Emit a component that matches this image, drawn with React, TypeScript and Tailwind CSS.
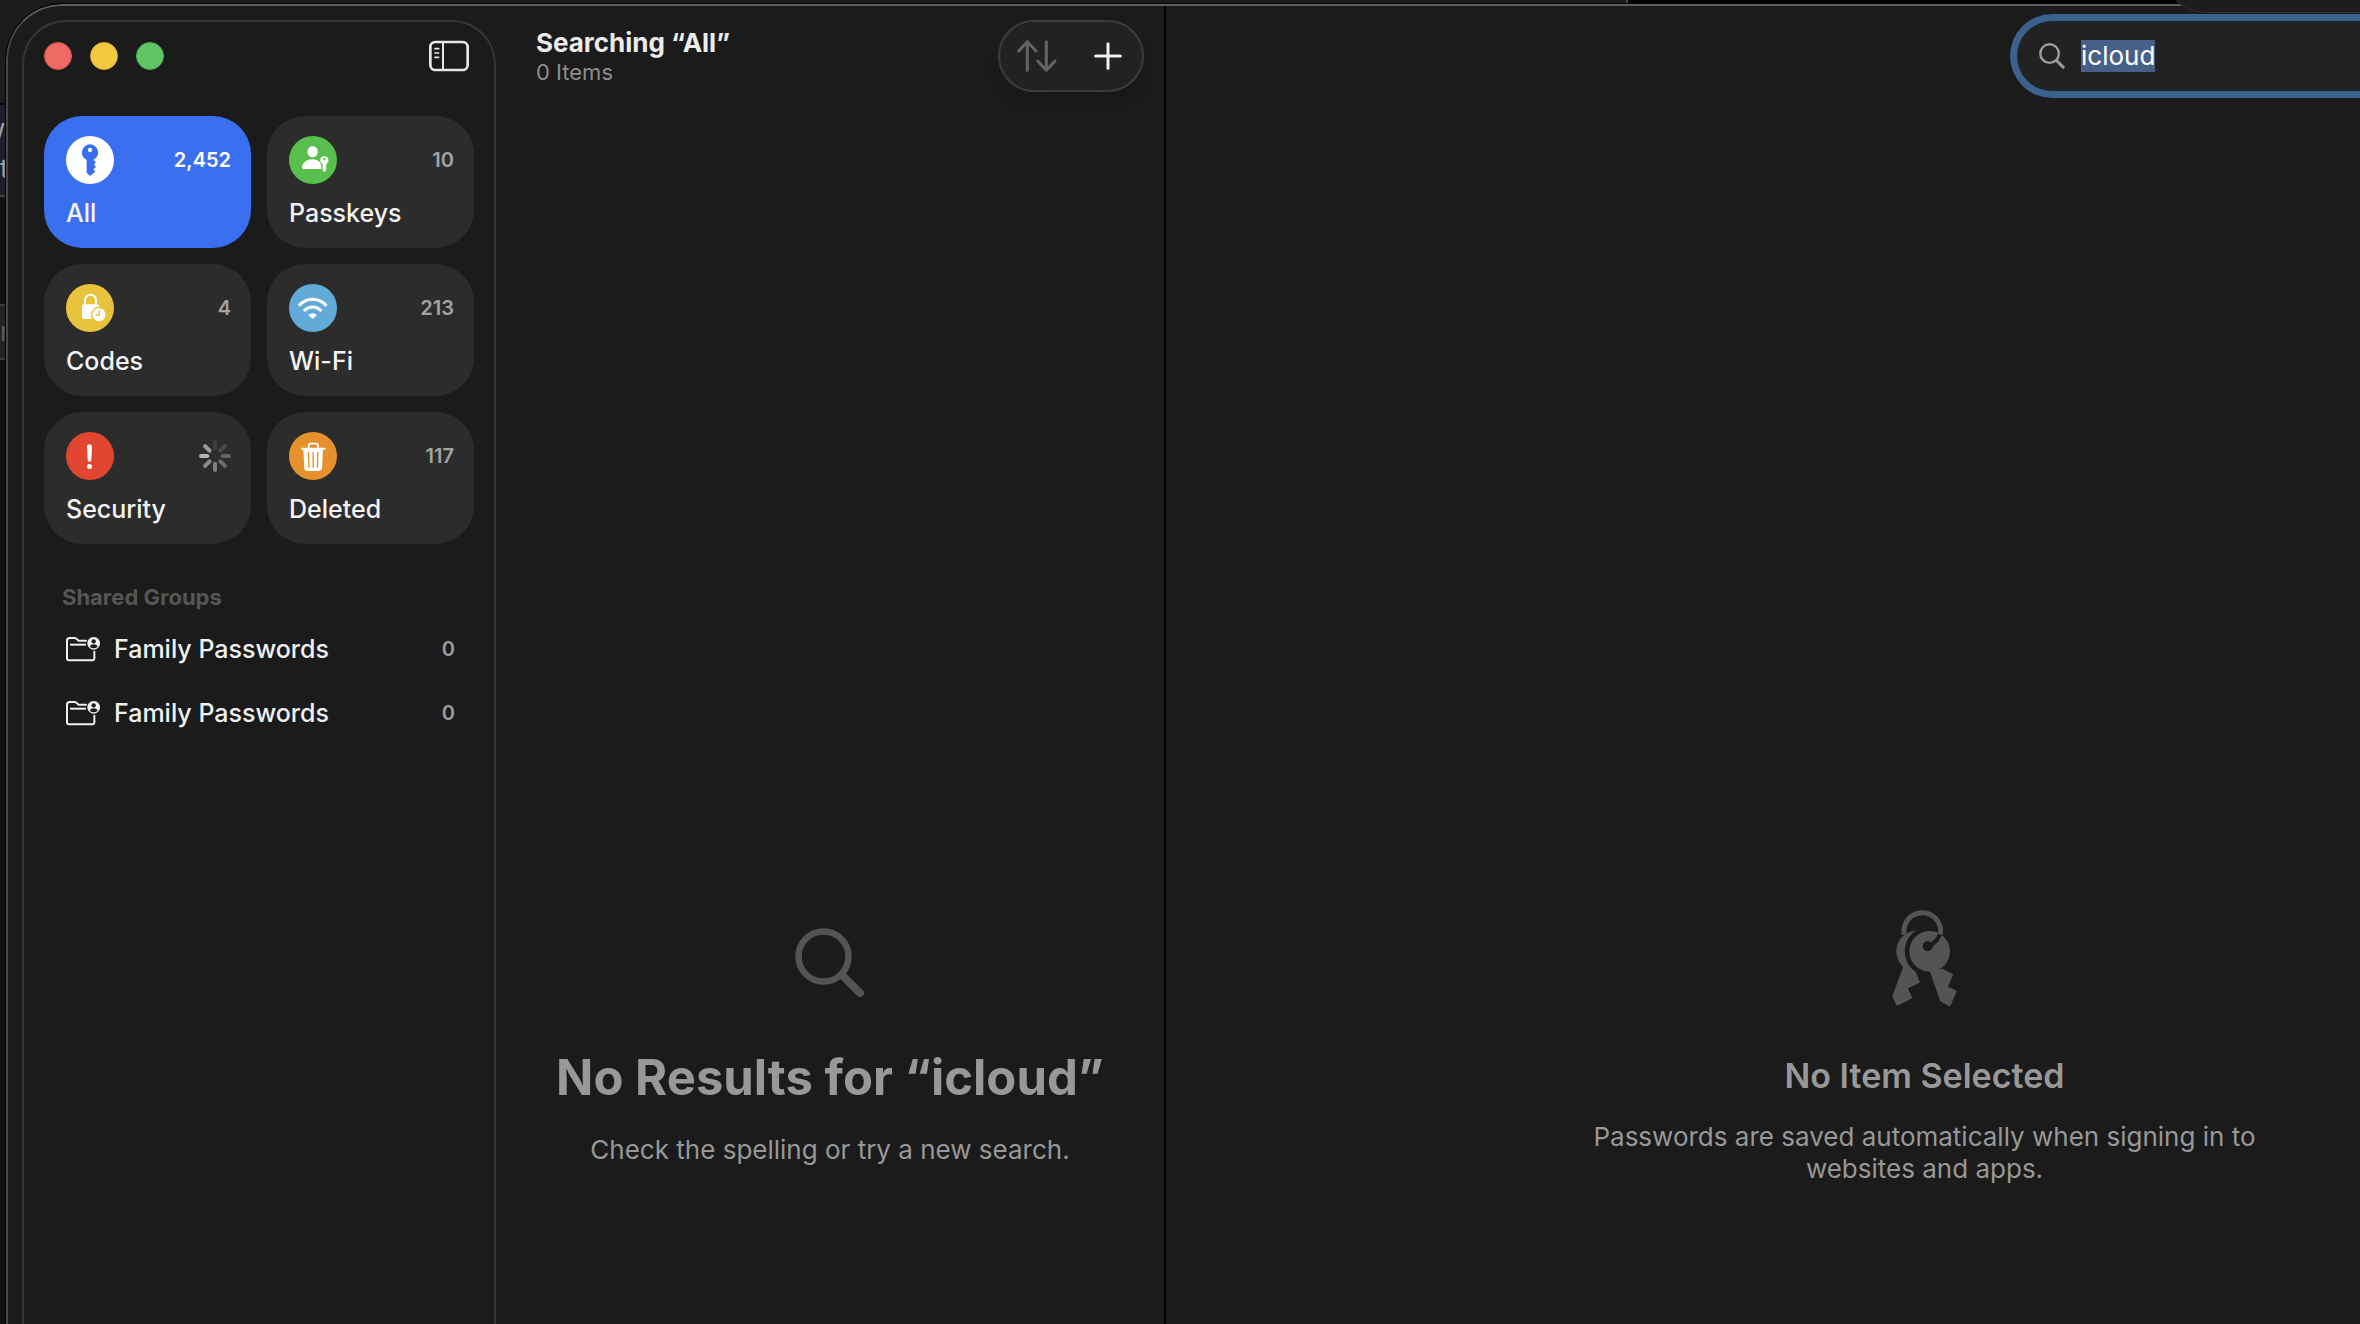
import { useEffect, useRef } from "react";
import type { ReactNode } from "react";

interface Category {
  label: string;
  count?: string;
  color: string;
  icon: ReactNode;
  active?: boolean;
}

const categories: Category[] = [
  { label: "All", count: "2,452", color: "bg-white", icon: <KeyGlyph />, active: true },
  { label: "Passkeys", count: "10", color: "bg-[#58bf4c]", icon: <PasskeyGlyph /> },
  { label: "Codes", count: "4", color: "bg-[#eac33c]", icon: <CodesGlyph /> },
  { label: "Wi-Fi", count: "213", color: "bg-[#62abd9]", icon: <WifiGlyph /> },
  { label: "Security", color: "bg-[#e14631]", icon: <AlertGlyph /> },
  { label: "Deleted", count: "117", color: "bg-[#e6912e]", icon: <TrashGlyph /> },
];

const groups = [
  { id: 1, name: "Family Passwords", count: 0 },
  { id: 2, name: "Family Passwords", count: 0 },
];

function KeyGlyph() {
  return (
    <svg viewBox="0 0 144 144" className="size-12" aria-hidden="true">
      <path
        fill="#3a6ff0"
        fillRule="evenodd"
        d="M72 25a24.500 24.500 0 0 1 10 46.800L90 78l-6 7 6 8-8 7 6 7-16 13-10-10V71.800A24.500 24.500 0 0 1 72 25Zm0 10.500a6.500 6.500 0 1 0 0 13 6.500 6.500 0 0 0 0-13Z"
      />
    </svg>
  );
}

function PasskeyGlyph() {
  return (
    <svg viewBox="0 0 144 144" className="size-12" aria-hidden="true" fill="#fff">
      <ellipse cx="71" cy="47" rx="15.500" ry="17" />
      <path d="M44 99c-3 0-5-2-5-5 1-14 15-24 31-24 9 0 17 3 22 8 1 4 3 7 5 9v12Z" />
      <path
        fillRule="evenodd"
        d="M106 61a12 12 0 0 1 5 23l2 4-3 4 3 4-3 4 1 3-5 5-5-5V84a12 12 0 0 1 5-23Zm0 5a3.500 3.500 0 1 0 0 7 3.500 3.500 0 0 0 0-7Z"
      />
    </svg>
  );
}

function CodesGlyph() {
  return (
    <svg viewBox="0 0 144 144" className="size-12" aria-hidden="true">
      <path d="M57 64V48a16.500 16 0 0 1 33 0v16" fill="none" stroke="#fff" strokeWidth="6" />
      <rect x="48" y="61" width="51" height="44" rx="6" fill="#fff" />
      <circle cx="99" cy="92" r="24" fill="#eac33c" />
      <circle cx="99" cy="92" r="19.500" fill="#fff" />
      <path d="M100 80v13H90" fill="none" stroke="#eac33c" strokeWidth="4" strokeLinecap="round" />
    </svg>
  );
}

function WifiGlyph() {
  return (
    <svg viewBox="0 0 144 144" className="size-12" aria-hidden="true" fill="none" stroke="#fff" strokeWidth="9">
      <path d="M30 65Q47 46 71 46t41 19" />
      <path d="M45 81q11-12 26-12t26 12" />
      <path d="M58 93q13-10 26 0L71 105Z" fill="#fff" stroke="none" />
    </svg>
  );
}

function AlertGlyph() {
  return (
    <svg viewBox="0 0 144 144" className="size-12" aria-hidden="true" fill="#fff">
      <path d="M63 44a7.500 7.500 0 0 1 15 0l-2 40a5.500 5.500 0 0 1-11 0Z" />
      <circle cx="70.500" cy="103.500" r="7.500" />
    </svg>
  );
}

function TrashGlyph() {
  return (
    <svg viewBox="0 0 144 144" className="size-12" aria-hidden="true" fill="none" stroke="#fff">
      <path d="M59 49v-8q0-6 6-6h16q6 0 6 6v8" strokeWidth="5" />
      <path d="M39 50h68" strokeWidth="6" strokeLinecap="round" />
      <path d="M43 52h59l-3 57q-1 8-8 8H54q-7 0-8-8Z" fill="#fff" stroke="none" />
      <path d="m58 61 2 45M72.500 61v45M87 61l-2 45" stroke="#e6912e" strokeWidth="4" strokeLinecap="round" />
    </svg>
  );
}

function Spinner() {
  const shades = ["#3f3f3f", "#4b4b4b", "#646464", "#6c6c6c", "#808080", "#8c8c8c", "#b4b4b4", "#9c9c9c"];
  return (
    <svg viewBox="-47 -48 94 96" className="size-8" role="img" aria-label="Loading">
      {shades.map((shade, i) => (
        <path
          key={shade}
          d="M0-23v-19"
          stroke={shade}
          strokeWidth="12"
          strokeLinecap="round"
          transform={`rotate(${i * 45})`}
        />
      ))}
    </svg>
  );
}

function SidebarIcon() {
  return (
    <svg viewBox="0 0 120 96" className="h-8 w-10" fill="none" stroke="#e8e8e8" aria-hidden="true">
      <rect x="4" y="6" width="112" height="84" rx="15" strokeWidth="8" />
      <path d="M42 8v80" strokeWidth="6" />
      <path d="M18 26h11M18 39h11M18 52h11" strokeWidth="5" strokeLinecap="round" />
    </svg>
  );
}

function SharedFolderIcon() {
  return (
    <svg viewBox="0 0 105 75" className="h-[25px] w-[35px]" fill="none" stroke="#f0f0f0" aria-hidden="true">
      <path d="M60 11H38l-7-6q-2-2-5-2H11q-8 0-8 8v53q0 6 6 6h70q6 0 6-6V44" strokeWidth="6" strokeLinecap="round" />
      <path d="M12 23h48" strokeWidth="6" />
      <circle cx="83" cy="19" r="19" fill="#f0f0f0" stroke="none" />
      <circle cx="83" cy="13" r="6.500" fill="#1b1b1b" stroke="none" />
      <path d="M71 29q3-7 12-7t12 7q-5 5-12 5t-12-5Z" fill="#1b1b1b" stroke="none" />
    </svg>
  );
}

function Magnifier({ className }: { className: string }) {
  return (
    <svg viewBox="0 0 70 70" className={className} fill="none" stroke="currentColor" aria-hidden="true">
      <circle cx="28.500" cy="28.500" r="25" strokeWidth="6.500" />
      <path d="m47 47 18 18" strokeWidth="8" strokeLinecap="round" />
    </svg>
  );
}

function KeyRing() {
  return (
    <svg viewBox="95 53 198 297" className="h-[99px] w-[66px]" fill="#545454" aria-hidden="true">
      <mask id="behind-front-key">
        <rect x="90" y="50" width="210" height="300" fill="#fff" />
        <circle cx="208" cy="183" r="75" fill="#000" />
      </mask>
      <path d="M132 133a55 55 0 1 1 108-1" fill="none" stroke="#545454" strokeWidth="15" />
      <g mask="url(#behind-front-key)">
        <circle cx="171" cy="183" r="63" />
      </g>
      <path d="M130 226c8 5 20 12 32 14l3 3 13 31q1 4-3 5l-32 15 12 26q1 3-2 5l-39 20q-4 2-6-2l-11-22q-1-3 0-6Z" />
      <circle cx="208" cy="183" r="61" />
      <path d="m208 242 32 91 25 14q4 2 6-2l17-40q1-3-2-5l-23-11 15-34q1-3-2-5l-30-15Z" />
      <circle cx="202" cy="168" r="15" fill="#1b1b1b" />
      <path d="M202 168q28-10 36-36" fill="none" stroke="#1b1b1b" strokeWidth="12" />
    </svg>
  );
}

function CategoryCard({ label, count, color, icon, active }: Category) {
  return (
    <button
      type="button"
      className={`rounded-[38px] pt-5 pr-5 pb-[19px] pl-[22px] text-left ${active ? "bg-[#3a6ff0]" : "bg-[#2c2c2c]"}`}
    >
      <span className="flex items-center justify-between">
        <span className={`size-12 rounded-full ${color}`}>{icon}</span>
        {count ? (
          <span className={`text-[20px] font-semibold ${active ? "text-white" : "text-[#a3a3a3]"}`}>{count}</span>
        ) : (
          <Spinner />
        )}
      </span>
      <span className="mt-[13px] block text-[25px] leading-8 font-medium text-[#f4f4f4]">{label}</span>
    </button>
  );
}

function Sidebar() {
  return (
    <aside className="mt-[14px] ml-[14px] flex w-[474px] shrink-0 flex-col rounded-t-[44px] border-2 border-b-0 border-[#363636] px-5 pt-[18px]">
      <div className="flex h-8 items-center justify-between">
        <div className="flex gap-[18px]">
          <button type="button" aria-label="Close" className="size-7 rounded-full border border-[#e0524c] bg-[#ed6a65]" />
          <button type="button" aria-label="Minimize" className="size-7 rounded-full border border-[#dcb02c] bg-[#f3c93f]" />
          <button type="button" aria-label="Zoom" className="size-7 rounded-full border border-[#48b04c] bg-[#61c566]" />
        </div>
        <button type="button" aria-label="Toggle sidebar" className="mr-[5px]">
          <SidebarIcon />
        </button>
      </div>

      <nav className="mt-11 grid grid-cols-2 gap-4">
        {categories.map((category) => (
          <CategoryCard key={category.label} {...category} />
        ))}
      </nav>

      <h2 className="mt-10 px-[18px] text-[22px] leading-[26px] font-bold text-[#565656]">Shared Groups</h2>
      <ul className="mt-[7px]">
        {groups.map((group) => (
          <li key={group.id}>
            <a href="#" className="flex h-16 items-center pr-[19px] pl-[22px]">
              <SharedFolderIcon />
              <span className="ml-[13px] flex-1 text-[25px] leading-8 font-medium text-[#f0f0f0]">{group.name}</span>
              <span className="text-[20px] font-semibold text-[#9c9c9c]">{group.count}</span>
            </a>
          </li>
        ))}
      </ul>
    </aside>
  );
}

function ResultsPane() {
  return (
    <section className="flex w-[670px] shrink-0 flex-col border-r-2 border-black">
      <header className="flex items-center justify-between pt-[14px] pr-5 pl-10">
        <div>
          <h1 className="text-[26px] leading-8 font-bold text-[#ececec]">Searching “All”</h1>
          <p className="text-[22px] leading-[26px] text-[#8e8e8e]">0 Items</p>
        </div>
        <div className="flex h-[72px] items-center gap-[37px] rounded-full border-2 border-[#3c3c3c] bg-[#222222] pr-5 pl-[17px] shadow-lg">
          <button type="button" aria-label="Sort">
            <svg viewBox="0 0 120 96" className="h-8 w-10" fill="none" stroke="#646464" strokeWidth="9" strokeLinecap="round" strokeLinejoin="round" aria-hidden="true">
              <path d="M31 91V6M5 33 31 5l26 28" />
              <path d="M88 5v85M62 63l26 28 26-28" />
            </svg>
          </button>
          <button type="button" aria-label="New item">
            <svg viewBox="0 0 84 84" className="size-7" stroke="#f2f2f2" strokeWidth="9" strokeLinecap="round" aria-hidden="true">
              <path d="M42 5v74M5 42h74" />
            </svg>
          </button>
        </div>
      </header>

      <div className="flex flex-1 flex-col items-center justify-end pb-[158px] text-center text-[#989898]">
        <Magnifier className="size-[70px] text-[#545454]" />
        <h2 className="mt-12 text-[49px] leading-[64px] font-bold">No Results for “icloud”</h2>
        <p className="mt-6 text-[26px] leading-8">Check the spelling or try a new search.</p>
      </div>
    </section>
  );
}

function DetailPane() {
  const searchRef = useRef<HTMLInputElement>(null);

  useEffect(() => {
    searchRef.current?.focus();
    searchRef.current?.select();
  }, []);

  return (
    <section className="flex min-w-0 flex-1 flex-col">
      <header className="flex justify-end pt-2">
        <label className="flex h-[84px] w-[350px] items-center gap-4 rounded-l-full border-7 border-r-0 border-[#3a628e] bg-[#222222] pl-[22px]">
          <Magnifier className="size-[26px] text-[#9c9c9c]" />
          <input
            ref={searchRef}
            type="text"
            aria-label="Search"
            defaultValue="icloud"
            className="min-w-0 flex-1 bg-transparent text-[26px] leading-8 text-white outline-none selection:bg-[#476088] selection:text-white"
          />
        </label>
      </header>

      <div className="flex flex-1 flex-col items-center justify-end pb-[139px] pl-[323px] text-center text-[#989898]">
        <KeyRing />
        <h2 className="mt-12 text-[34px] leading-[42px] font-semibold">No Item Selected</h2>
        <p className="mt-6 max-w-[680px] text-[26px] leading-8">
          Passwords are saved automatically when signing in to websites and apps.
        </p>
      </div>
    </section>
  );
}

// Slivers of the windows that lie behind this one
function Backdrop() {
  return (
    <div className="absolute inset-0 overflow-hidden bg-[#111111]" aria-hidden="true">
      <div className="flex h-[103px]">
        <div className="w-[69%] border-r-2 border-[#4a4a4a] bg-[#1c1c1c]" />
        <div className="flex-1 bg-black" />
      </div>
      <div className="flex h-[94px] w-20 flex-col items-start border-y-2 border-t-black border-b-[#454545] bg-[#201e2c] pt-1 text-[26px] leading-10 text-[#a0a0a0]">
        <span className="-ml-4">w</span>
        <span>t</span>
      </div>
      <div className="mt-[107px] h-14 w-20 border-y-2 border-[#3c3c3c] bg-[#242424] text-[26px] leading-[52px] text-[#5c5c5c]">r</div>
    </div>
  );
}

export default function App() {
  return (
    <div className="relative min-h-screen overflow-hidden font-['Inter','Liberation_Sans',sans-serif]">
      <Backdrop />
      <div className="relative flex min-h-screen pt-1 pl-[6px]">
        <main className="flex flex-1 rounded-tl-[56px] border-t-2 border-l-2 border-t-[#5e5e5e] border-l-[#484848] bg-[#1b1b1b] outline-1 outline-black">
          <Sidebar />
          <ResultsPane />
          <DetailPane />
        </main>
      </div>
      <div className="absolute -top-12 right-0 h-[61px] w-[198px] rounded-bl-[44px] border-b border-[#333333] bg-[#1c1d1d]" />
    </div>
  );
}
